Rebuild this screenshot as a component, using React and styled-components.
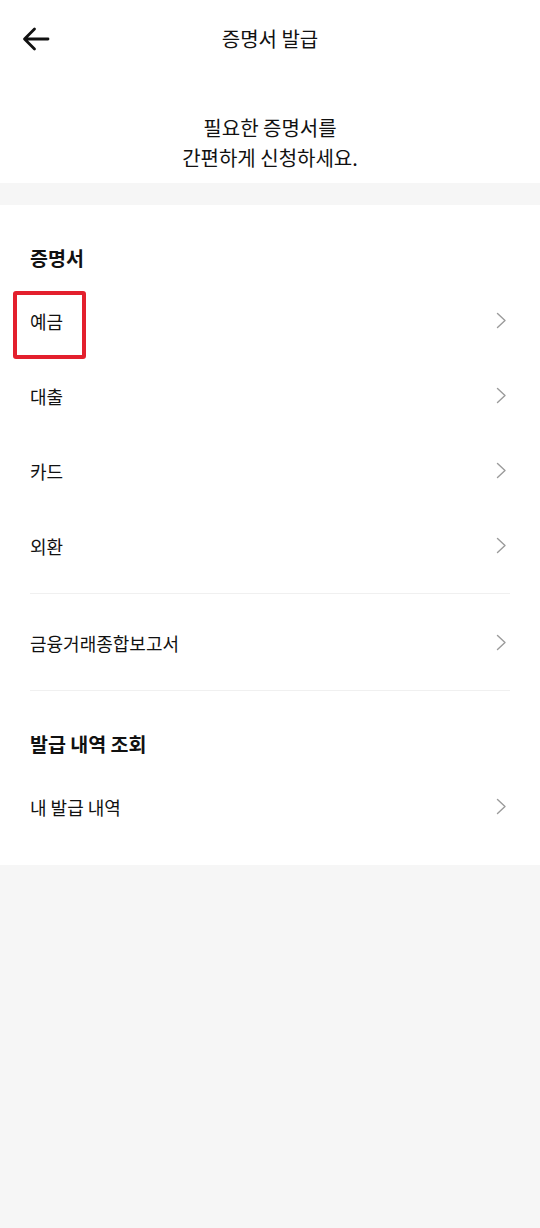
import React from "react";
import styled, { createGlobalStyle } from "styled-components";

const Global = createGlobalStyle`
  html, body { margin: 0; padding: 0; background: #f6f6f6; }
  body { font-family: "Noto Sans CJK KR", "Noto Sans", sans-serif; color: #111; -webkit-font-smoothing: antialiased; }
  #root { min-height: 1228px; background: #f6f6f6; }
`;

const Page = styled.div`
  width: 540px;
  min-height: 1228px;
  background: #f6f6f6;
`;

const Top = styled.div`
  background: #fff;
`;

const Header = styled.header`
  height: 78px;
  display: flex;
  align-items: center;
  justify-content: center;
  position: relative;
`;

const BackButton = styled.button`
  position: absolute;
  left: 18px;
  top: 50%;
  transform: translateY(-50%);
  width: 36px;
  height: 36px;
  padding: 0;
  border: 0;
  background: none;
  display: flex;
  align-items: center;
  justify-content: center;
`;

const Title = styled.h1`
  margin: 0;
  font-size: 20px;
  font-weight: 400;
  line-height: 26px;
  color: #111;
`;

const Intro = styled.p`
  margin: 0;
  padding: 35px 0 10px;
  text-align: center;
  font-size: 20px;
  line-height: 30px;
  color: #111;
`;

const Band = styled.div`
  height: 22px;
  background: #f6f6f6;
`;

const Section = styled.section`
  background: #fff;
  padding: 40px 0 21px;
`;

const Heading = styled.h2`
  margin: ${(p) => (p.$first ? "0" : "40px")} 30px 12px;
  font-size: 19.5px;
  font-weight: 700;
  line-height: 26px;
  color: #111;
`;

const Row = styled.div`
  position: relative;
  height: 75px;
  padding: 0 33px 0 30px;
  display: flex;
  align-items: center;
  justify-content: space-between;
`;

const Label = styled.span`
  font-size: 18px;
  line-height: 24px;
  color: #111;
`;

const Divider = styled.hr`
  margin: 10px 30px 11px;
  border: 0;
  height: 1px;
  background: #f0f0f0;
`;

const Highlight = styled.span`
  position: absolute;
  left: 13px;
  top: 8px;
  width: 73px;
  height: 68px;
  box-sizing: border-box;
  border: 4px solid #e3202d;
  border-radius: 3px;
  pointer-events: none;
`;

const Chevron = () => (
  <svg width="11" height="17" viewBox="0 0 11 17" fill="none">
    <path d="M1.5 1.5 L9 8.5 L1.5 15.5" stroke="#9b9b9b" strokeWidth="1.4" strokeLinecap="round" strokeLinejoin="round" />
  </svg>
);

const ArrowLeft = () => (
  <svg width="28" height="24" viewBox="0 0 28 24" fill="none">
    <path d="M26 12 H3 M12.5 2 L2.5 12 L12.5 22" stroke="#111" strokeWidth="2.8" strokeLinecap="round" strokeLinejoin="round" />
  </svg>
);

const Item = ({ label, highlight }) => (
  <Row>
    <Label>{label}</Label>
    <Chevron />
    {highlight && <Highlight />}
  </Row>
);

export default function App() {
  return (
    <Page>
      <Global />
      <Top>
        <Header>
          <BackButton aria-label="뒤로">
            <ArrowLeft />
          </BackButton>
          <Title>증명서 발급</Title>
        </Header>
        <Intro>
          필요한 증명서를
          <br />
          간편하게 신청하세요.
        </Intro>
      </Top>
      <Band />
      <Section>
        <Heading $first>증명서</Heading>
        <Item label="예금" highlight />
        <Item label="대출" />
        <Item label="카드" />
        <Item label="외환" />
        <Divider />
        <Item label="금융거래종합보고서" />
        <Divider />
        <Heading>발급 내역 조회</Heading>
        <Item label="내 발급 내역" />
      </Section>
    </Page>
  );
}
